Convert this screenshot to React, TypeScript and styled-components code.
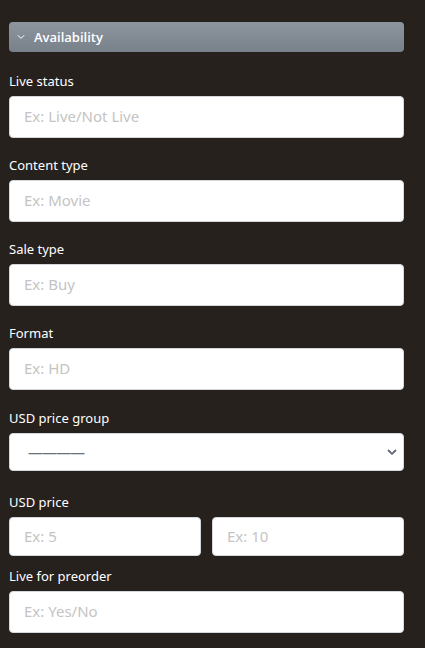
import React from "react";
import styled, { createGlobalStyle } from "styled-components";

const GlobalStyle = createGlobalStyle`
  html, body { margin: 0; padding: 0; background: #27211e; }
  body { font-family: "Noto Sans", "Open Sans", Arial, sans-serif; }
  * { box-sizing: border-box; }
`;

const Page = styled.div`
  width: 425px;
  min-height: 648px;
  background: #27211e;
  padding: 22px 21px 0 9px;
`;

const SectionHeader = styled.div`
  height: 30px;
  border-radius: 4px;
  background: linear-gradient(to bottom, #8d959e, #78818a);
  display: flex;
  align-items: center;
  padding-left: 8px;
  gap: 9px;
  color: #ffffff;
  font-family: "Open Sans", "Noto Sans", sans-serif;
  font-size: 13px;
  font-weight: 600;
`;

const Form = styled.div`
  display: flex;
  flex-direction: column;
  padding-top: 20px;
`;

const Field = styled.div<{ $after: number }>`
  display: flex;
  flex-direction: column;
  margin-bottom: ${(p) => p.$after}px;
`;

const Label = styled.label`
  color: #ffffff;
  font-size: 13px;
  line-height: 18px;
  height: 18px;
  margin-bottom: 6px;
`;

const Input = styled.input<{ $h?: number }>`
  width: 100%;
  height: ${(p) => p.$h ?? 42}px;
  border: 1px solid #d4d7dc;
  border-radius: 4px;
  background: #ffffff;
  padding: 0 14px 2px;
  font-family: inherit;
  font-size: 15px;
  color: #333;
  outline: none;
  &::placeholder { color: #c4c4c4; }
`;

const SelectBox = styled.div`
  position: relative;
  height: 38px;
`;

const Select = styled.select`
  width: 100%;
  height: 38px;
  border: 1px solid #d4d7dc;
  border-radius: 4px;
  background: #ffffff;
  appearance: none;
  -webkit-appearance: none;
  padding: 0 30px 0 18px;
  font-family: inherit;
  font-size: 15px;
  letter-spacing: -1px;
  color: #6b7078;
  outline: none;
`;

const Chevron = styled.svg`
  position: absolute;
  right: 7px;
  top: 16px;
  pointer-events: none;
`;

const Row = styled.div`
  display: grid;
  grid-template-columns: 1fr 1fr;
  gap: 11px;
`;

export default function App() {
  return (
    <>
      <GlobalStyle />
      <Page>
        <SectionHeader>
          <svg width="8" height="6" viewBox="0 0 8 6">
            <path d="M0.8 1.2 L4 4.4 L7.2 1.2" fill="none" stroke="#fff" strokeWidth="1" />
          </svg>
          <span>Availability</span>
        </SectionHeader>
        <Form>
          <Field $after={18}>
            <Label>Live status</Label>
            <Input placeholder="Ex: Live/Not Live" />
          </Field>
          <Field $after={18}>
            <Label>Content type</Label>
            <Input placeholder="Ex: Movie" />
          </Field>
          <Field $after={18}>
            <Label>Sale type</Label>
            <Input placeholder="Ex: Buy" />
          </Field>
          <Field $after={19}>
            <Label>Format</Label>
            <Input placeholder="Ex: HD" />
          </Field>
          <Field $after={22}>
            <Label>USD price group</Label>
            <SelectBox>
              <Select defaultValue="">
                <option value="">————</option>
              </Select>
              <Chevron width="10" height="6" viewBox="0 0 10 6">
                <path d="M1 1 L5 4.8 L9 1" fill="none" stroke="#5f6670" strokeWidth="1.8" />
              </Chevron>
            </SelectBox>
          </Field>
          <Field $after={11}>
            <Label>USD price</Label>
            <Row>
              <Input $h={39} placeholder="Ex: 5" />
              <Input $h={39} placeholder="Ex: 10" />
            </Row>
          </Field>
          <Field $after={0}>
            <Label>Live for preorder</Label>
            <Input placeholder="Ex: Yes/No" />
          </Field>
        </Form>
      </Page>
    </>
  );
}
